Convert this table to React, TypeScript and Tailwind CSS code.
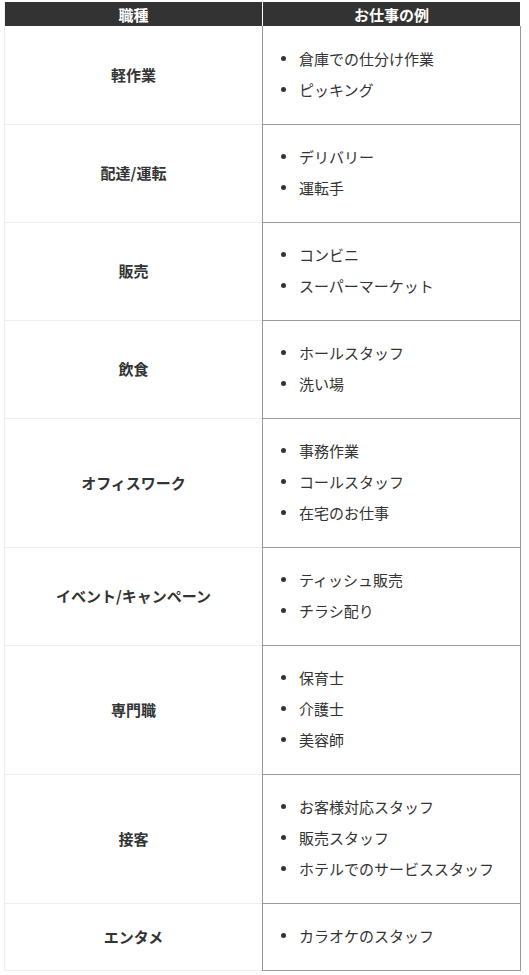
import React from "react";

const rows: { name: string; items: string[] }[] = [
  { name: "軽作業", items: ["倉庫での仕分け作業", "ピッキング"] },
  { name: "配達/運転", items: ["デリバリー", "運転手"] },
  { name: "販売", items: ["コンビニ", "スーパーマーケット"] },
  { name: "飲食", items: ["ホールスタッフ", "洗い場"] },
  { name: "オフィスワーク", items: ["事務作業", "コールスタッフ", "在宅のお仕事"] },
  { name: "イベント/キャンペーン", items: ["ティッシュ販売", "チラシ配り"] },
  { name: "専門職", items: ["保育士", "介護士", "美容師"] },
  { name: "接客", items: ["お客様対応スタッフ", "販売スタッフ", "ホテルでのサービススタッフ"] },
  { name: "エンタメ", items: ["カラオケのスタッフ"] },
];

export default function App() {
  return (
    <div
      className="bg-white w-[529px] min-h-[975px] pt-[2px] pl-[4px] text-[#333] text-[15px]"
      style={{ fontFamily: '"Noto Sans CJK JP", "Noto Sans", sans-serif' }}
    >
      <div className="w-[517px]">
        <div className="flex h-[24px]">
          <div className="w-[258px] border-l border-[#eeeeee] bg-[#333333] bg-clip-padding flex items-center justify-center text-white font-bold leading-none">
            職種
          </div>
          <div className="w-[259px] px-[1px]">
            <div className="h-full bg-[#333333] flex items-center justify-center text-white font-bold leading-none">
              お仕事の例
            </div>
          </div>
        </div>
        <div className="flex h-[1px]">
          <div className="w-[258px] border-l border-[#eeeeee]" />
          <div className="w-[259px] border-l border-r border-[#999999]" />
        </div>
        {rows.map((r) => (
          <div key={r.name} className="flex">
            <div className="w-[258px] border-l border-b border-[#eeeeee] flex items-center justify-center font-bold">
              {r.name}
            </div>
            <div className="w-[259px] border-l border-r border-b border-[#999999] pt-[16px] pb-[19px] pl-[18px]">
              {r.items.map((it) => (
                <div key={it} className="flex items-center h-[31px]">
                  <span className="w-[5px] h-[5px] rounded-full bg-[#333333] mr-[13px] shrink-0" />
                  <span className="leading-none">{it}</span>
                </div>
              ))}
            </div>
          </div>
        ))}
      </div>
    </div>
  );
}
